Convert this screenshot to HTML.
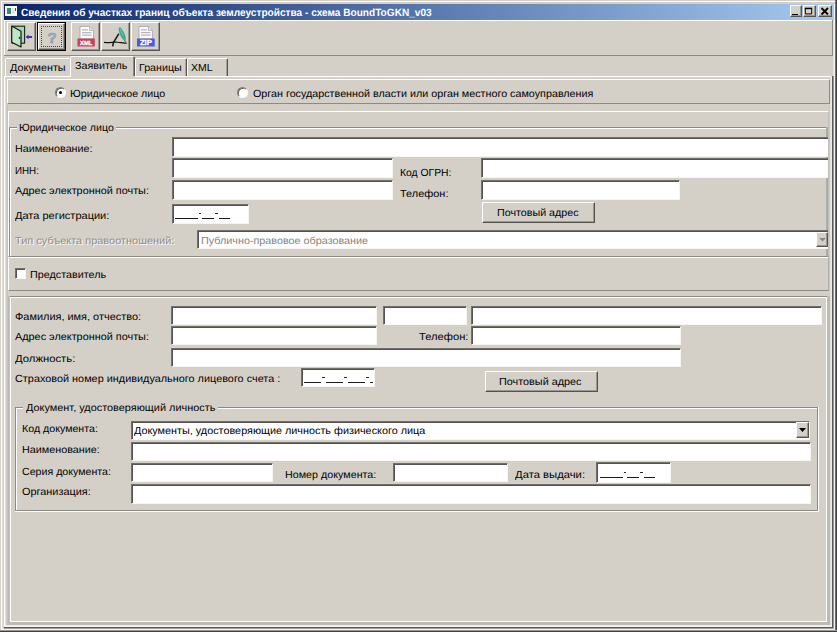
<!DOCTYPE html>
<html><head><meta charset="utf-8">
<style>
html,body{margin:0;padding:0;}
body{width:837px;height:632px;background:#d4d0c8;position:relative;overflow:hidden;font-family:"Liberation Sans",sans-serif;font-size:10.3px;color:#000;}
.a{position:absolute;box-sizing:border-box;}
.t{position:absolute;white-space:nowrap;line-height:12px;font-size:10.3px;transform-origin:0 0;text-rendering:geometricPrecision;}
.ttl{color:#fff;font-weight:bold;font-size:10.5px;}
.dis{color:#908e86;text-shadow:1px 1px 0 #fbfaf8;}
.gray{color:#86847e;}
.raised{border:1px solid;border-color:#fff #8c8a84 #8c8a84 #fff;}
.inp{position:absolute;box-sizing:border-box;background:#fff;border-style:solid;border-width:1px;border-color:#737069 #f6f5f2 #f6f5f2 #737069;box-shadow:inset 1px 1px 0 #55534f;overflow:hidden;}
.btn{position:absolute;box-sizing:border-box;background:#d4d0c8;border:1px solid;border-color:#fff #55534f #55534f #fff;box-shadow:inset -1px -1px 0 #9a9892;}
.ln{position:absolute;}
</style></head><body>
<div class="ln" style="left:1px;top:1px;width:835px;height:1px;background:#ffffff"></div>
<div class="ln" style="left:1px;top:1px;width:1px;height:629px;background:#ffffff"></div>
<div class="ln" style="left:2px;top:2px;width:1px;height:627px;background:#dfdcd6"></div>
<div class="ln" style="left:835px;top:0px;width:1px;height:632px;background:#707070"></div>
<div class="ln" style="left:836px;top:0px;width:1px;height:632px;background:#404040"></div>
<div class="ln" style="left:0px;top:630px;width:837px;height:1px;background:#9a9a98"></div>
<div class="ln" style="left:0px;top:631px;width:837px;height:1px;background:#404040"></div>
<div class="a" style="left:4px;top:4px;width:830px;height:16px;background:linear-gradient(90deg,#0a246a 0%,#a6caf0 100%);"></div>
<div class="a" style="left:5px;top:6px;width:12px;height:10px;background:#fff;"></div>
<div class="a" style="left:7px;top:8px;width:4px;height:6px;background:#2f8f74;"></div>
<div class="a" style="left:12px;top:8px;width:3px;height:6px;background:#e8e8e8;"></div>
<div class="a" style="left:15px;top:8px;width:1px;height:3px;background:#2a5a8a;"></div>
<div class="btn" style="left:789.6px;top:5.3px;width:12.6px;height:12px;"></div>
<div class="btn" style="left:802.9px;top:5.3px;width:13.1px;height:12px;"></div>
<div class="btn" style="left:818.2px;top:5.3px;width:13.6px;height:12px;"></div>
<div class="ln" style="left:792.2px;top:13.5px;width:5.6px;height:1.7px;background:#000"></div>
<svg class="a" style="left:803px;top:5px" width="14" height="13" viewBox="803 5 14 13"><path d="M805.3 8.6 H811.7 V13.9 H805.3 Z" fill="none" stroke="#000" stroke-width="1"/><path d="M804.8 8.4 H812.2" stroke="#000" stroke-width="1.4"/></svg>
<svg class="a" style="left:820px;top:7px" width="10" height="9" viewBox="0 0 10 9"><path d="M1.5 1 L8 7.5 M8 1 L1.5 7.5" stroke="#000" stroke-width="1.9" fill="none"/></svg>
<div class="ln" style="left:4px;top:20px;width:829px;height:1px;background:#ffffff"></div>
<div class="ln" style="left:4px;top:20px;width:1px;height:35px;background:#ffffff"></div>
<div class="ln" style="left:4px;top:55px;width:829px;height:1px;background:#8c8a84"></div>
<div class="ln" style="left:832px;top:20px;width:1px;height:36px;background:#8c8a84"></div>
<div class="btn" style="left:7px;top:22px;width:29px;height:29px;"></div>
<div class="btn" style="left:71px;top:22px;width:29px;height:29px;"></div>
<div class="btn" style="left:101px;top:22px;width:29px;height:29px;"></div>
<div class="btn" style="left:131px;top:22px;width:29px;height:29px;"></div>
<div class="a" style="left:37px;top:22px;width:29px;height:29px;border:1px solid #000;"></div>
<div class="btn" style="left:38px;top:23px;width:27px;height:27px;"></div>
<div class="a" style="left:41px;top:26px;width:21px;height:21px;border:1px dotted #4a4844;"></div>
<svg class="a" style="left:0;top:18px" width="170" height="40" viewBox="0 18 170 40">
<!-- door -->
<rect x="12.2" y="26.2" width="12.4" height="17" fill="#a9d6b1" stroke="#16241a" stroke-width="1.1"/>
<path d="M11.7 26 L21 31.2 L21 47 L11.7 42.3 Z" fill="#bfe6c6" stroke="#0e1a12" stroke-width="1.2" stroke-linejoin="round"/>
<rect x="18.8" y="36.8" width="1.5" height="2.2" fill="#27463a"/>
<path d="M25.6 36.9 L28.6 34.5 L28.6 35.9 L32.1 35.9 L32.1 37.9 L28.6 37.9 L28.6 39.3 Z" fill="#3a30cc"/>
<!-- question mark -->
<text x="52" y="42.9" text-anchor="middle" font-family="Liberation Sans, sans-serif" font-weight="bold" font-size="15.5" fill="#9db8cc" stroke="#73899c" stroke-width="0.45">?</text>
<!-- xml page -->
<path d="M80 26.4 H89.6 L93.6 30.4 V39 H80 Z" fill="#fbfbfb" stroke="#a8a8a8" stroke-width="0.9"/>
<path d="M89.6 26.4 V30.4 H93.6" fill="#e6e6e6" stroke="#a8a8a8" stroke-width="0.8"/>
<path d="M82 29.8 H88 M82 32.6 H91.5 M82 35.2 H91.5" stroke="#b4b8bc" stroke-width="1.3"/>
<rect x="77.5" y="38.5" width="17.3" height="8" fill="#c8405e"/>
<text x="86.2" y="44.9" text-anchor="middle" font-family="Liberation Sans, sans-serif" font-weight="bold" font-size="6.2" fill="#fff" stroke="#fff" stroke-width="0.3" textLength="12.4" lengthAdjust="spacingAndGlyphs">XML</text>
<!-- signature -->
<path d="M104 42.3 C108 42.6 111 42.8 114 42.2 C116 41.6 118 42.6 120.5 42.6 C122 42.2 124 43.4 126.7 43.2" fill="none" stroke="#141414" stroke-width="1.2"/>
<path d="M112.8 45.8 L113.4 42.5 L118.6 34.2" fill="none" stroke="#141414" stroke-width="1.5" stroke-linecap="round"/>
<ellipse cx="122.2" cy="34" rx="2.2" ry="7.2" transform="rotate(-24 122.2 34)" fill="#3aa78e"/><path d="M120.2 29 L123.2 36" stroke="#7fd0bd" stroke-width="0.8"/>
<path d="M124.6 40.2 L125.6 42.4" stroke="#2d6e5e" stroke-width="1"/>
<!-- zip page -->
<path d="M139 26.4 H148.4 L152.4 30.4 V39 H139 Z" fill="#fbfbfb" stroke="#a8a8a8" stroke-width="0.9"/>
<path d="M148.4 26.4 V30.4 H152.4" fill="#e6e6e6" stroke="#a8a8a8" stroke-width="0.8"/>
<path d="M141 29.8 H147 M141 32.6 H150.4 M141 35.2 H150.4" stroke="#b4b8bc" stroke-width="1.3"/>
<rect x="137" y="38.5" width="17.7" height="8" fill="#4a5adc"/>
<text x="145.9" y="45.3" text-anchor="middle" font-family="Liberation Sans, sans-serif" font-weight="bold" font-size="7" fill="#fff" stroke="#fff" stroke-width="0.3" textLength="12" lengthAdjust="spacingAndGlyphs">ZIP</text>
</svg>

<div class="ln" style="left:4px;top:76px;width:829px;height:1px;background:#ffffff"></div>
<div class="ln" style="left:4px;top:76px;width:1px;height:552px;background:#ffffff"></div>
<div class="ln" style="left:5px;top:77px;width:1px;height:548px;background:#e2dfd9"></div>
<div class="ln" style="left:829px;top:105px;width:1px;height:186px;background:#cbc8c1"></div>
<div class="ln" style="left:830px;top:76px;width:1px;height:550px;background:#e4e2dd"></div>
<div class="ln" style="left:831px;top:76px;width:1px;height:551px;background:#ebe9e5"></div>
<div class="ln" style="left:832px;top:76px;width:1px;height:552px;background:#5a5856"></div>
<div class="ln" style="left:833px;top:76px;width:1px;height:553px;background:#9a9896"></div>
<div class="ln" style="left:833px;top:20px;width:1px;height:56px;background:#e6e4e0"></div>
<div class="ln" style="left:834px;top:4px;width:1px;height:626px;background:#f4f3f0"></div>
<div class="ln" style="left:4px;top:625px;width:827px;height:1px;background:#f2f1ee"></div>
<div class="ln" style="left:4px;top:626px;width:828px;height:1px;background:#f6f5f3"></div>
<div class="ln" style="left:4px;top:627px;width:829px;height:1px;background:#5a5856"></div>
<div class="ln" style="left:4px;top:628px;width:830px;height:1px;background:#a5a3a0"></div>
<div class="ln" style="left:2px;top:629px;width:833px;height:1px;background:#f4f3f0"></div>
<div class="ln" style="left:5px;top:59px;width:1px;height:17px;background:#ffffff"></div>
<div class="ln" style="left:6px;top:58px;width:63px;height:1px;background:#ffffff"></div>
<div class="ln" style="left:135px;top:59px;width:1px;height:17px;background:#ffffff"></div>
<div class="ln" style="left:136px;top:58px;width:50px;height:1px;background:#ffffff"></div>
<div class="ln" style="left:186px;top:59px;width:1px;height:17px;background:#55534f"></div>
<div class="ln" style="left:185px;top:59px;width:1px;height:17px;background:#a5a39d"></div>
<div class="ln" style="left:187px;top:59px;width:1px;height:17px;background:#ffffff"></div>
<div class="ln" style="left:188px;top:58px;width:39px;height:1px;background:#ffffff"></div>
<div class="ln" style="left:227px;top:59px;width:1px;height:17px;background:#55534f"></div>
<div class="ln" style="left:226px;top:59px;width:1px;height:17px;background:#a5a39d"></div>
<div class="ln" style="left:70px;top:56px;width:65px;height:21px;background:#d4d0c8"></div>
<div class="ln" style="left:70px;top:57px;width:1px;height:20px;background:#ffffff"></div>
<div class="ln" style="left:71px;top:56px;width:62px;height:1px;background:#ffffff"></div>
<div class="ln" style="left:134px;top:57px;width:1px;height:19px;background:#55534f"></div>
<div class="ln" style="left:133px;top:57px;width:1px;height:19px;background:#8c8a84"></div>
<div class="a raised" style="left:7px;top:79px;width:823px;height:25px;"></div>
<div class="a raised" style="left:8px;top:111px;width:821px;height:146px;border-right-color:#c2c0ba;"></div>
<div class="ln" style="left:9px;top:127px;width:8px;height:1px;background:#8c8a84"></div>
<div class="ln" style="left:10px;top:128px;width:7px;height:1px;background:#ffffff"></div>
<div class="ln" style="left:116px;top:127px;width:711px;height:1px;background:#8c8a84"></div>
<div class="ln" style="left:116px;top:128px;width:710px;height:1px;background:#ffffff"></div>
<div class="ln" style="left:9px;top:127px;width:1px;height:129px;background:#8c8a84"></div>
<div class="ln" style="left:10px;top:128px;width:1px;height:128px;background:#ffffff"></div>
<div class="ln" style="left:826px;top:127px;width:1px;height:129px;background:#b0aea8"></div>
<div class="ln" style="left:827px;top:127px;width:1px;height:129px;background:#a9a7a1"></div>
<div class="a raised" style="left:8px;top:257px;width:821px;height:34px;border-right-color:#b0aea8;"></div>
<div class="ln" style="left:6px;top:78px;width:1px;height:218px;background:#cdcac3"></div>
<div class="ln" style="left:7px;top:105px;width:1px;height:191px;background:#c6c3bc"></div>
<div class="ln" style="left:6px;top:296px;width:1px;height:329px;background:#cfccc5"></div>
<div class="ln" style="left:7px;top:296px;width:1px;height:329px;background:#c5c2bb"></div>
<div class="ln" style="left:8px;top:296px;width:1px;height:329px;background:#bbb8b1"></div>
<div class="ln" style="left:9px;top:296px;width:1px;height:329px;background:#c6c3bc"></div>
<div class="ln" style="left:827px;top:296px;width:3px;height:329px;background:#bebbb4"></div>
<div class="ln" style="left:7px;top:622px;width:823px;height:3px;background:#bebbb4"></div>
<div class="ln" style="left:10px;top:296px;width:817px;height:1px;background:#8c8a84"></div>
<div class="ln" style="left:10px;top:297px;width:816px;height:1px;background:#ffffff"></div>
<div class="ln" style="left:10px;top:297px;width:1px;height:325px;background:#ffffff"></div>
<div class="ln" style="left:826px;top:297px;width:1px;height:325px;background:#ffffff"></div>
<div class="ln" style="left:10px;top:621px;width:817px;height:1px;background:#ffffff"></div>
<div class="inp" style="left:172px;top:137px;width:656px;height:20px;border-right:0"></div>
<div class="inp" style="left:172px;top:158px;width:221px;height:20px;"></div>
<div class="inp" style="left:481px;top:158px;width:347px;height:20px;border-right:0"></div>
<div class="inp" style="left:172px;top:180px;width:221px;height:20px;"></div>
<div class="inp" style="left:481px;top:180px;width:199px;height:20px;"></div>
<div class="inp" style="left:172px;top:204px;width:77px;height:20px;"></div>
<div class="inp" style="left:197px;top:230px;width:631px;height:19px;border-right:0"></div>
<div class="btn" style="left:816px;top:232px;width:12px;height:15px;"></div>
<svg class="a" style="left:819px;top:238px" width="7" height="4" viewBox="0 0 7 4"><path d="M0 0H7L3.5 3.5Z" fill="#8a8880"/></svg>
<div class="btn" style="left:482px;top:202px;width:113px;height:21px;"></div>
<div class="a" style="left:55px;top:87.3px;width:10.6px;height:10.6px;border-radius:50%;background:#fff;border:1px solid;border-color:#7d7b76 #fbfaf8 #fbfaf8 #7d7b76;box-shadow:inset 0.8px 0.8px 0 #4c4a46;"></div>
<div class="a" style="left:237.4px;top:87.3px;width:10.6px;height:10.6px;border-radius:50%;background:#fff;border:1px solid;border-color:#7d7b76 #fbfaf8 #fbfaf8 #7d7b76;box-shadow:inset 0.8px 0.8px 0 #4c4a46;"></div>
<div class="a" style="left:58.6px;top:90.9px;width:3.4px;height:3.4px;border-radius:50%;background:#000;"></div>
<div class="inp" style="left:15.4px;top:268.3px;width:11px;height:11px;"></div>
<div class="inp" style="left:171px;top:306px;width:206px;height:19px;"></div>
<div class="inp" style="left:383px;top:306px;width:84px;height:19px;"></div>
<div class="inp" style="left:471px;top:306px;width:351px;height:19px;"></div>
<div class="inp" style="left:171px;top:326px;width:206px;height:19px;"></div>
<div class="inp" style="left:471px;top:326px;width:210px;height:19px;"></div>
<div class="inp" style="left:171px;top:348px;width:510px;height:19px;"></div>
<div class="inp" style="left:301px;top:368px;width:74px;height:19px;"></div>
<div class="btn" style="left:485px;top:371px;width:113px;height:21px;"></div>
<div class="ln" style="left:15px;top:407px;width:8px;height:1px;background:#8c8a84"></div>
<div class="ln" style="left:16px;top:408px;width:7px;height:1px;background:#ffffff"></div>
<div class="ln" style="left:218px;top:407px;width:600px;height:1px;background:#8c8a84"></div>
<div class="ln" style="left:218px;top:408px;width:599px;height:1px;background:#ffffff"></div>
<div class="ln" style="left:15px;top:407px;width:1px;height:104px;background:#8c8a84"></div>
<div class="ln" style="left:16px;top:408px;width:1px;height:103px;background:#ffffff"></div>
<div class="ln" style="left:817px;top:407px;width:1px;height:104px;background:#8c8a84"></div>
<div class="ln" style="left:818px;top:407px;width:1px;height:105px;background:#ffffff"></div>
<div class="ln" style="left:15px;top:510px;width:803px;height:1px;background:#8c8a84"></div>
<div class="ln" style="left:15px;top:511px;width:804px;height:1px;background:#ffffff"></div>
<div class="inp" style="left:131px;top:421px;width:679px;height:19px;"></div>
<div class="btn" style="left:796px;top:422px;width:13px;height:16px;"></div>
<svg class="a" style="left:799px;top:428px" width="7" height="4" viewBox="0 0 7 4"><path d="M0 0H7L3.5 4Z" fill="#000"/></svg>
<div class="inp" style="left:131px;top:442px;width:680px;height:19px;"></div>
<div class="inp" style="left:131px;top:463px;width:142px;height:19px;"></div>
<div class="inp" style="left:393px;top:463px;width:115px;height:19px;"></div>
<div class="inp" style="left:596px;top:462px;width:75px;height:21px;"></div>
<div class="inp" style="left:131px;top:484px;width:680px;height:20px;"></div>
<div class="ln" style="left:174.6px;top:217.8px;width:23.3px;height:1px;background:#1c1c1c"></div>
<div class="ln" style="left:198.6px;top:212.8px;width:2.8px;height:1.2px;background:#262626"></div>
<div class="ln" style="left:202.3px;top:217.8px;width:11.7px;height:1px;background:#1c1c1c"></div>
<div class="ln" style="left:215.1px;top:212.8px;width:2.8px;height:1.2px;background:#262626"></div>
<div class="ln" style="left:218.8px;top:217.8px;width:11.7px;height:1px;background:#1c1c1c"></div>
<div class="ln" style="left:599.6px;top:476.5px;width:23.3px;height:1px;background:#1c1c1c"></div>
<div class="ln" style="left:623.6px;top:471.5px;width:2.8px;height:1.2px;background:#262626"></div>
<div class="ln" style="left:627.3px;top:476.5px;width:11.7px;height:1px;background:#1c1c1c"></div>
<div class="ln" style="left:640.1px;top:471.5px;width:2.8px;height:1.2px;background:#262626"></div>
<div class="ln" style="left:643.8px;top:476.5px;width:11.7px;height:1px;background:#1c1c1c"></div>
<div class="ln" style="left:304.1px;top:381.8px;width:17px;height:1px;background:#1c1c1c"></div>
<div class="ln" style="left:321.8px;top:376.8px;width:2.8px;height:1.2px;background:#262626"></div>
<div class="ln" style="left:325.6px;top:381.8px;width:17.2px;height:1px;background:#1c1c1c"></div>
<div class="ln" style="left:343.9px;top:376.8px;width:2.9px;height:1.2px;background:#262626"></div>
<div class="ln" style="left:347.6px;top:381.8px;width:17.4px;height:1px;background:#1c1c1c"></div>
<div class="ln" style="left:366px;top:376.8px;width:2.9px;height:1.2px;background:#262626"></div>
<div class="ln" style="left:369.8px;top:381.8px;width:3px;height:1px;background:#1c1c1c"></div>
<div class="t ttl" style="left:21.02px;top:7.40px;transform:scaleX(0.9614)">Сведения об участках границ объекта землеустройства - схема BoundToGKN_v03</div>
<div class="t " style="left:10.00px;top:63.20px;transform:scaleX(1.0476)">Документы</div>
<div class="t " style="left:75.48px;top:61.30px;transform:scaleX(1.0437)">Заявитель</div>
<div class="t " style="left:138.82px;top:63.20px;transform:scaleX(1.0365)">Границы</div>
<div class="t " style="left:191.25px;top:63.20px;transform:scaleX(1.0146)">XML</div>
<div class="t " style="left:69.53px;top:88.60px;transform:scaleX(1.0330)">Юридическое лицо</div>
<div class="t " style="left:253.08px;top:88.60px;transform:scaleX(1.0445)">Орган государственной власти или орган местного самоуправления</div>
<div class="t cap" style="left:18.53px;top:122.50px;transform:scaleX(1.0297)">Юридическое лицо</div>
<div class="t " style="left:14.92px;top:144.00px;transform:scaleX(1.0441)">Наименование:</div>
<div class="t " style="left:14.99px;top:165.50px;transform:scaleX(0.9489)">ИНН:</div>
<div class="t " style="left:15.00px;top:186.30px;transform:scaleX(1.0543)">Адрес электронной почты:</div>
<div class="t " style="left:15.00px;top:211.10px;transform:scaleX(1.0693)">Дата регистрации:</div>
<div class="t dis" style="left:15.23px;top:236.00px;transform:scaleX(1.0646)">Тип субъекта правоотношений:</div>
<div class="t " style="left:400.05px;top:167.50px;transform:scaleX(1.0061)">Код ОГРН:</div>
<div class="t " style="left:400.43px;top:189.10px;transform:scaleX(1.0629)">Телефон:</div>
<div class="t " style="left:496.72px;top:208.00px;transform:scaleX(1.0408)">Почтовый адрес</div>
<div class="t gray" style="left:200.51px;top:235.80px;transform:scaleX(1.0483)">Публично-правовое образование</div>
<div class="t " style="left:29.81px;top:269.60px;transform:scaleX(1.0476)">Представитель</div>
<div class="t " style="left:14.97px;top:311.90px;transform:scaleX(1.0618)">Фамилия, имя, отчество:</div>
<div class="t " style="left:15.00px;top:332.00px;transform:scaleX(1.0543)">Адрес электронной почты:</div>
<div class="t " style="left:15.00px;top:353.60px;transform:scaleX(1.0963)">Должность:</div>
<div class="t " style="left:15.17px;top:373.80px;transform:scaleX(1.0559)">Страховой номер индивидуального лицевого счета :</div>
<div class="t " style="left:419.33px;top:332.00px;transform:scaleX(1.0854)">Телефон:</div>
<div class="t " style="left:498.71px;top:377.00px;transform:scaleX(1.0524)">Почтовый адрес</div>
<div class="t cap" style="left:25.60px;top:402.70px;transform:scaleX(1.0588)">Документ, удостоверяющий личность</div>
<div class="t " style="left:21.63px;top:424.20px;transform:scaleX(1.0328)">Код документа:</div>
<div class="t " style="left:134.20px;top:426.40px;transform:scaleX(1.0513)">Документы, удостоверяющие личность физического лица</div>
<div class="t " style="left:21.61px;top:445.30px;transform:scaleX(1.0483)">Наименование:</div>
<div class="t " style="left:21.88px;top:467.40px;transform:scaleX(1.0324)">Серия документа:</div>
<div class="t " style="left:21.87px;top:487.00px;transform:scaleX(1.0583)">Организация:</div>
<div class="t " style="left:285.22px;top:469.70px;transform:scaleX(1.0419)">Номер документа:</div>
<div class="t " style="left:515.10px;top:469.70px;transform:scaleX(1.0941)">Дата выдачи:</div>
</body></html>
